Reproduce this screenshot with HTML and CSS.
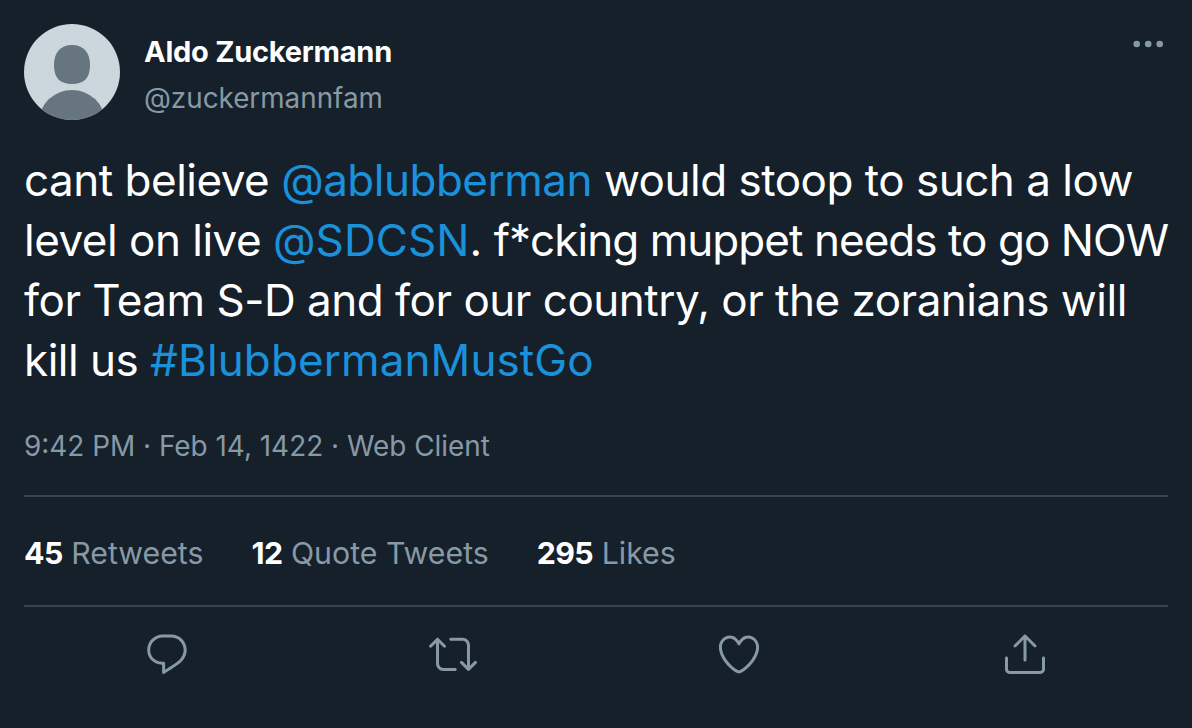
FILE: index.html
```html
<!DOCTYPE html>
<html lang="en">
<head>
<meta charset="utf-8">
<title>Tweet</title>
<link rel="stylesheet" href="styles.css">
</head>
<body>
<main class="tweet">
  <header class="author">
    <svg class="avatar" viewBox="0 0 96 96" aria-hidden="true">
      <defs><clipPath id="avatar-clip"><circle cx="48" cy="48" r="48"/></clipPath></defs>
      <g clip-path="url(#avatar-clip)">
        <rect width="96" height="96" fill="#ccd6dd"/>
        <path d="M48 21c12 0 18 8 18 20 0 13-6 19-18 19s-18-6-18-19c0-12 6-20 18-20z" fill="#66757f"/>
        <ellipse cx="48" cy="98" rx="33" ry="32" fill="#66757f"/>
      </g>
    </svg>
    <div class="names">
      <div class="name">Aldo Zuckermann</div>
      <div class="handle">@zuckermannfam</div>
    </div>
    <svg class="more" viewBox="0 0 30 8" aria-hidden="true">
      <circle cx="3.7" cy="4" r="3.3"/><circle cx="15.2" cy="4" r="3.3"/><circle cx="26.7" cy="4" r="3.3"/>
    </svg>
  </header>
  <p class="body">cant believe <span class="link">@ablubberman</span> would stoop to such a low level on live <span class="link wide">@SDCSN</span>. <span class="tight">f*cking muppet needs to go NOW</span> for Team S-D and for our country, or the zoranians will kill us <span class="link wide">#BlubbermanMustGo</span></p>
  <div class="meta">9:42 PM · Feb 14, 1422 · Web Client</div>
  <div class="stats">
    <span class="stat"><b>45</b> Retweets</span>
    <span class="stat"><b>12</b> Quote Tweets</span>
    <span class="stat"><b>295</b> Likes</span>
  </div>
  <div class="actions">
    <span class="action"><svg viewBox="0 0 24 24" aria-hidden="true"><path d="M14.046 2.242l-4.148-.01h-.002c-4.374 0-7.8 3.427-7.8 7.802 0 4.098 3.186 7.206 7.465 7.37v3.828c0 .108.044.286.12.403.142.225.384.347.632.347.138 0 .277-.038.402-.118.264-.168 6.473-4.14 8.088-5.506 1.902-1.61 3.04-3.97 3.043-6.312v-.017c-.006-4.367-3.43-7.787-7.8-7.788zm3.787 12.972c-1.134.96-4.862 3.405-6.772 4.643V16.67c0-.414-.335-.75-.75-.75h-.396c-3.66 0-6.318-2.476-6.318-5.886 0-3.534 2.768-6.302 6.3-6.302l4.147.01h.002c3.532 0 6.3 2.766 6.302 6.296-.003 1.91-.942 3.844-2.514 5.176z"/></svg></span>
    <span class="action"><svg viewBox="0 0 24 24" aria-hidden="true"><path d="M23.77 15.67c-.292-.293-.767-.293-1.06 0l-2.22 2.22V7.65c0-2.068-1.683-3.75-3.75-3.75h-5.85c-.414 0-.75.336-.75.75s.336.75.75.75h5.85c1.24 0 2.25 1.01 2.25 2.25v10.24l-2.22-2.22c-.293-.293-.768-.293-1.06 0s-.294.768 0 1.06l3.5 3.5c.145.147.337.22.53.22s.383-.072.53-.22l3.5-3.5c.294-.292.294-.767 0-1.06zm-10.66 3.28H7.26c-1.24 0-2.25-1.01-2.25-2.25V6.46l2.22 2.22c.148.147.34.22.532.22s.384-.073.53-.22c.293-.293.293-.768 0-1.06l-3.5-3.5c-.293-.294-.768-.294-1.06 0l-3.5 3.5c-.294.292-.294.767 0 1.06s.767.293 1.06 0l2.22-2.22V16.7c0 2.068 1.683 3.75 3.75 3.75h5.85c.414 0 .75-.336.75-.75s-.337-.75-.75-.75z"/></svg></span>
    <span class="action"><svg viewBox="0 0 24 24" aria-hidden="true"><path d="M12 21.638h-.014C9.403 21.59 1.95 14.856 1.95 8.478c0-3.064 2.525-5.754 5.403-5.754 2.29 0 3.83 1.58 4.646 2.73.814-1.148 2.354-2.73 4.645-2.73 2.88 0 5.404 2.69 5.404 5.755 0 6.376-7.454 13.11-10.037 13.157H12zM7.354 4.225c-2.08 0-3.903 1.988-3.903 4.255 0 5.74 7.034 11.596 8.55 11.658 1.518-.062 8.55-5.917 8.55-11.658 0-2.267-1.823-4.255-3.903-4.255-2.528 0-3.94 2.936-3.952 2.965-.23.562-1.156.562-1.387 0-.015-.03-1.426-2.965-3.955-2.965z"/></svg></span>
    <span class="action"><svg viewBox="0 0 24 24" aria-hidden="true"><path d="M17.53 7.47l-5-5c-.293-.293-.768-.293-1.06 0l-5 5c-.294.293-.294.768 0 1.06s.767.294 1.06 0l3.72-3.72V15c0 .414.336.75.75.75s.75-.336.75-.75V4.81l3.72 3.72c.146.147.338.22.53.22s.384-.072.53-.22c.293-.293.293-.767 0-1.06z"/><path d="M19.708 21.944H4.292C3.028 21.944 2 20.916 2 19.652V14c0-.414.336-.75.75-.75s.75.336.75.75v5.652c0 .437.355.792.792.792h15.416c.437 0 .792-.355.792-.792V14c0-.414.336-.75.75-.75s.75.336.75.75v5.652c0 1.264-1.028 2.292-2.292 2.292z"/></svg></span>
  </div>
</main>
</body>
</html>
```

FILE: styles.css
```css
* { box-sizing: border-box; }
html, body { margin: 0; height: 100%; }
body {
  background: #15202b;
  color: #fff;
  font-family: Inter, "Liberation Sans", sans-serif;
  overflow: hidden;
}
.tweet { padding: 24px 24px 0; }
.author { display: flex; align-items: flex-start; }
.avatar { width: 96px; height: 96px; flex: none; }
.names { margin-left: 24px; flex: 1; }
.name { font-size: 29px; font-weight: 700; line-height: 32px; margin-top: 12px; letter-spacing: -0.25px; }
.handle { font-size: 27.8px; line-height: 32px; margin-top: 14px; color: #8899a6; }
.more { width: 30px; height: 8px; fill: #8899a6; margin-top: 16px; margin-right: 5px; flex: none; }
.body {
  margin: 30px 0 0;
  font-size: 44px;
  line-height: 60px;
  letter-spacing: -0.5px;
  width: 1160px;
}
.link { color: #1a91da; }
.wide { letter-spacing: 0.1px; }
.tight { letter-spacing: -0.95px; }
.meta {
  margin-top: 36px;
  font-size: 27.9px;
  line-height: 40px;
  color: #8899a6;
  padding-bottom: 29px;
  border-bottom: 2px solid #38444d;
}
.stats {
  display: flex;
  gap: 48px;
  height: 110px;
  padding-top: 4px;
  align-items: center;
  font-size: 30.3px;
  color: #8899a6;
  border-bottom: 2px solid #38444d;
}
.stat b { color: #fff; font-weight: 700; letter-spacing: -0.6px; }
.actions { display: flex; justify-content: space-around; padding-top: 23px; width: 1144px; }
.action { display: block; width: 48px; height: 48px; }
.action svg { display: block; width: 48px; height: 48px; fill: #8899a6; }
```
